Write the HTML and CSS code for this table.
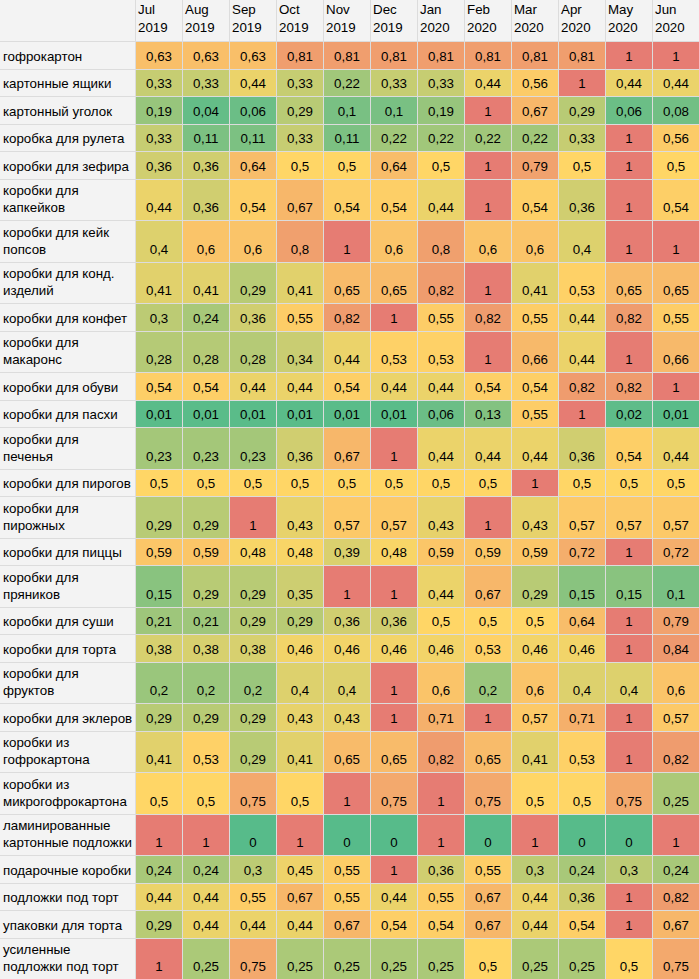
FILE: index.html
```html
<!DOCTYPE html>
<html lang="ru">
<head>
<meta charset="utf-8">
<title>Heatmap</title>
<link rel="stylesheet" href="styles.css">
</head>
<body>
<div class="sheet">
  <div class="row head"><div class="lab"></div><div class="h">Jul<br>2019</div><div class="h">Aug<br>2019</div><div class="h">Sep<br>2019</div><div class="h">Oct<br>2019</div><div class="h">Nov<br>2019</div><div class="h">Dec<br>2019</div><div class="h">Jan<br>2020</div><div class="h">Feb<br>2020</div><div class="h">Mar<br>2020</div><div class="h">Apr<br>2020</div><div class="h">May<br>2020</div><div class="h">Jun<br>2020</div></div>
  <div class="row"><div class="lab">гофрокартон</div><div class="v">0,63</div><div class="v">0,63</div><div class="v">0,63</div><div class="v">0,81</div><div class="v">0,81</div><div class="v">0,81</div><div class="v">0,81</div><div class="v">0,81</div><div class="v">0,81</div><div class="v">0,81</div><div class="v">1</div><div class="v">1</div></div>
  <div class="row"><div class="lab">картонные ящики</div><div class="v">0,33</div><div class="v">0,33</div><div class="v">0,44</div><div class="v">0,33</div><div class="v">0,22</div><div class="v">0,33</div><div class="v">0,33</div><div class="v">0,44</div><div class="v">0,56</div><div class="v">1</div><div class="v">0,44</div><div class="v">0,44</div></div>
  <div class="row"><div class="lab">картонный уголок</div><div class="v">0,19</div><div class="v">0,04</div><div class="v">0,06</div><div class="v">0,29</div><div class="v">0,1</div><div class="v">0,1</div><div class="v">0,19</div><div class="v">1</div><div class="v">0,67</div><div class="v">0,29</div><div class="v">0,06</div><div class="v">0,08</div></div>
  <div class="row"><div class="lab">коробка для рулета</div><div class="v">0,33</div><div class="v">0,11</div><div class="v">0,11</div><div class="v">0,33</div><div class="v">0,11</div><div class="v">0,22</div><div class="v">0,22</div><div class="v">0,22</div><div class="v">0,22</div><div class="v">0,33</div><div class="v">1</div><div class="v">0,56</div></div>
  <div class="row"><div class="lab">коробки для зефира</div><div class="v">0,36</div><div class="v">0,36</div><div class="v">0,64</div><div class="v">0,5</div><div class="v">0,5</div><div class="v">0,64</div><div class="v">0,5</div><div class="v">1</div><div class="v">0,79</div><div class="v">0,5</div><div class="v">1</div><div class="v">0,5</div></div>
  <div class="row tall"><div class="lab">коробки для<br>капкейков</div><div class="v">0,44</div><div class="v">0,36</div><div class="v">0,54</div><div class="v">0,67</div><div class="v">0,54</div><div class="v">0,54</div><div class="v">0,44</div><div class="v">1</div><div class="v">0,54</div><div class="v">0,36</div><div class="v">1</div><div class="v">0,54</div></div>
  <div class="row tall"><div class="lab">коробки для кейк<br>попсов</div><div class="v">0,4</div><div class="v">0,6</div><div class="v">0,6</div><div class="v">0,8</div><div class="v">1</div><div class="v">0,6</div><div class="v">0,8</div><div class="v">0,6</div><div class="v">0,6</div><div class="v">0,4</div><div class="v">1</div><div class="v">1</div></div>
  <div class="row tall"><div class="lab">коробки для конд.<br>изделий</div><div class="v">0,41</div><div class="v">0,41</div><div class="v">0,29</div><div class="v">0,41</div><div class="v">0,65</div><div class="v">0,65</div><div class="v">0,82</div><div class="v">1</div><div class="v">0,41</div><div class="v">0,53</div><div class="v">0,65</div><div class="v">0,65</div></div>
  <div class="row"><div class="lab">коробки для конфет</div><div class="v">0,3</div><div class="v">0,24</div><div class="v">0,36</div><div class="v">0,55</div><div class="v">0,82</div><div class="v">1</div><div class="v">0,55</div><div class="v">0,82</div><div class="v">0,55</div><div class="v">0,44</div><div class="v">0,82</div><div class="v">0,55</div></div>
  <div class="row tall"><div class="lab">коробки для<br>макаронс</div><div class="v">0,28</div><div class="v">0,28</div><div class="v">0,28</div><div class="v">0,34</div><div class="v">0,44</div><div class="v">0,53</div><div class="v">0,53</div><div class="v">1</div><div class="v">0,66</div><div class="v">0,44</div><div class="v">1</div><div class="v">0,66</div></div>
  <div class="row"><div class="lab">коробки для обуви</div><div class="v">0,54</div><div class="v">0,54</div><div class="v">0,44</div><div class="v">0,44</div><div class="v">0,54</div><div class="v">0,44</div><div class="v">0,44</div><div class="v">0,54</div><div class="v">0,54</div><div class="v">0,82</div><div class="v">0,82</div><div class="v">1</div></div>
  <div class="row"><div class="lab">коробки для пасхи</div><div class="v">0,01</div><div class="v">0,01</div><div class="v">0,01</div><div class="v">0,01</div><div class="v">0,01</div><div class="v">0,01</div><div class="v">0,06</div><div class="v">0,13</div><div class="v">0,55</div><div class="v">1</div><div class="v">0,02</div><div class="v">0,01</div></div>
  <div class="row tall"><div class="lab">коробки для<br>печенья</div><div class="v">0,23</div><div class="v">0,23</div><div class="v">0,23</div><div class="v">0,36</div><div class="v">0,67</div><div class="v">1</div><div class="v">0,44</div><div class="v">0,44</div><div class="v">0,44</div><div class="v">0,36</div><div class="v">0,54</div><div class="v">0,44</div></div>
  <div class="row"><div class="lab">коробки для пирогов</div><div class="v">0,5</div><div class="v">0,5</div><div class="v">0,5</div><div class="v">0,5</div><div class="v">0,5</div><div class="v">0,5</div><div class="v">0,5</div><div class="v">0,5</div><div class="v">1</div><div class="v">0,5</div><div class="v">0,5</div><div class="v">0,5</div></div>
  <div class="row tall"><div class="lab">коробки для<br>пирожных</div><div class="v">0,29</div><div class="v">0,29</div><div class="v">1</div><div class="v">0,43</div><div class="v">0,57</div><div class="v">0,57</div><div class="v">0,43</div><div class="v">1</div><div class="v">0,43</div><div class="v">0,57</div><div class="v">0,57</div><div class="v">0,57</div></div>
  <div class="row"><div class="lab">коробки для пиццы</div><div class="v">0,59</div><div class="v">0,59</div><div class="v">0,48</div><div class="v">0,48</div><div class="v">0,39</div><div class="v">0,48</div><div class="v">0,59</div><div class="v">0,59</div><div class="v">0,59</div><div class="v">0,72</div><div class="v">1</div><div class="v">0,72</div></div>
  <div class="row tall"><div class="lab">коробки для<br>пряников</div><div class="v">0,15</div><div class="v">0,29</div><div class="v">0,29</div><div class="v">0,35</div><div class="v">1</div><div class="v">1</div><div class="v">0,44</div><div class="v">0,67</div><div class="v">0,29</div><div class="v">0,15</div><div class="v">0,15</div><div class="v">0,1</div></div>
  <div class="row"><div class="lab">коробки для суши</div><div class="v">0,21</div><div class="v">0,21</div><div class="v">0,29</div><div class="v">0,29</div><div class="v">0,36</div><div class="v">0,36</div><div class="v">0,5</div><div class="v">0,5</div><div class="v">0,5</div><div class="v">0,64</div><div class="v">1</div><div class="v">0,79</div></div>
  <div class="row"><div class="lab">коробки для торта</div><div class="v">0,38</div><div class="v">0,38</div><div class="v">0,38</div><div class="v">0,46</div><div class="v">0,46</div><div class="v">0,46</div><div class="v">0,46</div><div class="v">0,53</div><div class="v">0,46</div><div class="v">0,46</div><div class="v">1</div><div class="v">0,84</div></div>
  <div class="row tall"><div class="lab">коробки для<br>фруктов</div><div class="v">0,2</div><div class="v">0,2</div><div class="v">0,2</div><div class="v">0,4</div><div class="v">0,4</div><div class="v">1</div><div class="v">0,6</div><div class="v">0,2</div><div class="v">0,6</div><div class="v">0,4</div><div class="v">0,4</div><div class="v">0,6</div></div>
  <div class="row"><div class="lab">коробки для эклеров</div><div class="v">0,29</div><div class="v">0,29</div><div class="v">0,29</div><div class="v">0,43</div><div class="v">0,43</div><div class="v">1</div><div class="v">0,71</div><div class="v">1</div><div class="v">0,57</div><div class="v">0,71</div><div class="v">1</div><div class="v">0,57</div></div>
  <div class="row tall"><div class="lab">коробки из<br>гофрокартона</div><div class="v">0,41</div><div class="v">0,53</div><div class="v">0,29</div><div class="v">0,41</div><div class="v">0,65</div><div class="v">0,65</div><div class="v">0,82</div><div class="v">0,65</div><div class="v">0,41</div><div class="v">0,53</div><div class="v">1</div><div class="v">0,82</div></div>
  <div class="row tall"><div class="lab">коробки из<br>микрогофрокартона</div><div class="v">0,5</div><div class="v">0,5</div><div class="v">0,75</div><div class="v">0,5</div><div class="v">1</div><div class="v">0,75</div><div class="v">1</div><div class="v">0,75</div><div class="v">0,5</div><div class="v">0,5</div><div class="v">0,75</div><div class="v">0,25</div></div>
  <div class="row tall"><div class="lab">ламинированные<br>картонные подложки</div><div class="v">1</div><div class="v">1</div><div class="v">0</div><div class="v">1</div><div class="v">0</div><div class="v">0</div><div class="v">1</div><div class="v">0</div><div class="v">1</div><div class="v">0</div><div class="v">0</div><div class="v">1</div></div>
  <div class="row"><div class="lab">подарочные коробки</div><div class="v">0,24</div><div class="v">0,24</div><div class="v">0,3</div><div class="v">0,45</div><div class="v">0,55</div><div class="v">1</div><div class="v">0,36</div><div class="v">0,55</div><div class="v">0,3</div><div class="v">0,24</div><div class="v">0,3</div><div class="v">0,24</div></div>
  <div class="row"><div class="lab">подложки под торт</div><div class="v">0,44</div><div class="v">0,44</div><div class="v">0,55</div><div class="v">0,67</div><div class="v">0,55</div><div class="v">0,44</div><div class="v">0,55</div><div class="v">0,67</div><div class="v">0,44</div><div class="v">0,36</div><div class="v">1</div><div class="v">0,82</div></div>
  <div class="row"><div class="lab">упаковки для торта</div><div class="v">0,29</div><div class="v">0,44</div><div class="v">0,44</div><div class="v">0,44</div><div class="v">0,67</div><div class="v">0,54</div><div class="v">0,54</div><div class="v">0,67</div><div class="v">0,44</div><div class="v">0,54</div><div class="v">1</div><div class="v">0,67</div></div>
  <div class="row tall"><div class="lab">усиленные<br>подложки под торт</div><div class="v">1</div><div class="v">0,25</div><div class="v">0,75</div><div class="v">0,25</div><div class="v">0,25</div><div class="v">0,25</div><div class="v">0,25</div><div class="v">0,5</div><div class="v">0,25</div><div class="v">0,25</div><div class="v">0,5</div><div class="v">0,75</div></div>
</div>
<script src="script.js"></script>
</body>
</html>
```

FILE: styles.css
```css
html, body {
  margin: 0;
  padding: 0;
  background: #ffffff;
}

body {
  font-family: "Liberation Sans", Arial, sans-serif;
  font-size: 13.333px;
  color: #000000;
}

.sheet {
  width: 699px;
  display: flex;
  flex-direction: column;
  gap: 1px;
  background: #dcdcdc;
}

.row {
  display: grid;
  grid-template-columns: 135px repeat(12, 1fr);
  column-gap: 1px;
  height: 26.5px;
}

.row.tall {
  height: 40.5px;
}

.row.head {
  height: 41px;
}

.row > div {
  background: #f3f3f3;
  display: flex;
  align-items: flex-end;
  padding: 0 3px 4px;
  line-height: 17px;
  white-space: nowrap;
  overflow: hidden;
}

.row.head > div {
  line-height: 18px;
  padding: 0 2px 4px;
}

.v {
  justify-content: center;
}
```

FILE: script.js
```js
(function () {
  var green = [87, 187, 138];
  var yellow = [255, 214, 102];
  var red = [230, 124, 115];
  function mix(a, b, t) {
    return a.map(function (x, i) { return Math.round(x + (b[i] - x) * t); });
  }
  var cells = document.querySelectorAll('.v');
  cells.forEach(function (c) {
    var v = parseFloat(c.textContent.replace(',', '.'));
    var col = v <= 0.5 ? mix(green, yellow, v / 0.5) : mix(yellow, red, (v - 0.5) / 0.5);
    c.style.background = 'rgb(' + col.join(',') + ')';
  });
})();
```
